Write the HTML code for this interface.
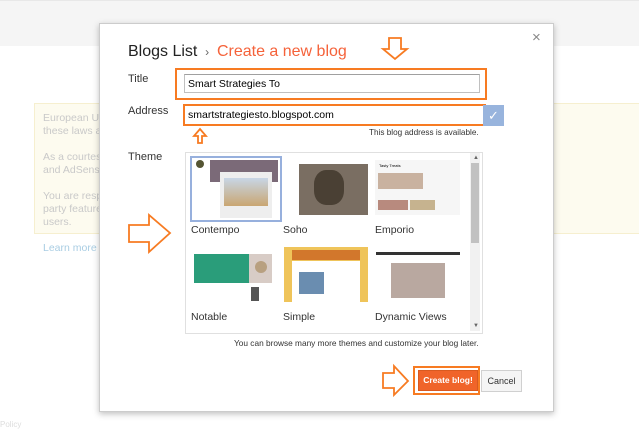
<!DOCTYPE html><html><head><style>
body{margin:0;width:639px;height:430px;overflow:hidden;background:#fff;font-family:"Liberation Sans",Arial,sans-serif;position:relative}
.a{position:absolute}
.y{left:34px;top:103px;width:620px;height:129px;background:#fdfbef;border:1px solid #f6efcf;color:#c9c9c9;font-size:10.5px;line-height:13px}
.t{font-size:11px;color:#333}
.th{position:absolute;overflow:hidden}
.lb{position:absolute;font-size:10.5px;color:#333}
</style></head><body>
<div class="a" style="left:0;top:0;width:639px;height:45px;background:#f5f5f5;border-top:1px solid #e8e8e8"></div>
<div class="a y"><div style="padding:8px 8px">European Union laws require you to give European Union visitors information ... g. In many cases,<br>these laws also<br><br>As a courtesy, ... e of Google Analytics<br>and AdSense<br><br>You are responsible ... example by adding third<br>party features, ... collected from your<br>users.<br><br><span style="color:#a9cde3">Learn more</span> about</div></div>
<div class="a" style="left:0;top:420px;font-size:8px;color:#ddd">Policy</div>
<div class="a" style="left:99px;top:23px;width:453px;height:387px;background:#fff;border:1px solid #ccc;box-shadow:0 2px 6px rgba(0,0,0,.25)"></div>
<div class="a" style="left:532px;top:29px;font-size:15px;color:#888">×</div>
<div class="a" style="left:128px;top:43px;font-size:16px;color:#222">Blogs List <span style="font-size:12px;color:#666">&nbsp;›&nbsp;</span> <span style="color:#f5623a">Create a new blog</span></div>
<div class="a t" style="left:128px;top:73px">Title</div>
<div class="a t" style="left:128px;top:105px">Address</div>
<div class="a t" style="left:128px;top:151px">Theme</div>
<div class="a" style="left:175px;top:68px;width:308px;height:28px;border:2px solid #f77b22"></div>
<div class="a" style="left:184px;top:74px;height:19px;border:1px solid #c0c0c0;border-top-color:#a0a0a0;font-size:10.5px;line-height:19px;padding-left:3px;box-sizing:border-box;width:296px">Smart Strategies To</div>
<div class="a" style="left:183px;top:104px;width:296px;height:18px;border:2px solid #f77b22;font-size:10.5px;line-height:18px;padding-left:3px">smartstrategiesto.blogspot.com</div>
<div class="a" style="left:483px;top:105px;width:21px;height:21px;background:#98b4dd;color:#fff;font-size:13px;text-align:center;line-height:21px">✓</div>
<div class="a" style="left:369px;top:128px;font-size:8.2px;color:#333">This blog address is available.</div>
<div class="a" style="left:185px;top:152px;width:296px;height:180px;border:1px solid #e0e0e0"></div>
<div class="a" style="left:470px;top:153px;width:10px;height:178px;background:#f1f1f1"></div>
<div class="a" style="left:471px;top:163px;width:8px;height:80px;background:#c1c1c1"></div>
<div class="a" style="left:473px;top:155px;font-size:6px;color:#666">▲</div>
<div class="a" style="left:473px;top:323px;font-size:6px;color:#666">▼</div>
<div class="th" style="left:190px;top:156px;width:88px;height:62px;border:2px solid #97b0dd;background:#fff">
<div class="a" style="left:18px;top:2px;width:68px;height:22px;background:#7b6a78"></div>
<div class="a" style="left:28px;top:14px;width:52px;height:46px;background:#eee"></div>
<div class="a" style="left:32px;top:20px;width:44px;height:28px;background:linear-gradient(#c8d6e6,#c9a672)"></div>
<div class="a" style="left:4px;top:2px;width:8px;height:8px;border-radius:50%;background:#553"></div></div>
<div class="th" style="left:284px;top:160px;width:84px;height:55px;background:#fff">
<div class="a" style="left:15px;top:4px;width:69px;height:51px;background:#7a6e62"></div>
<div class="a" style="left:30px;top:10px;width:30px;height:35px;border-radius:40%;background:#4a4034"></div></div>
<div class="th" style="left:375px;top:160px;width:85px;height:55px;background:#f6f6f6">
<div class="a" style="left:3px;top:13px;width:45px;height:16px;background:#c9b2a0"></div>
<div class="a" style="left:3px;top:40px;width:30px;height:10px;background:#b88a7e"></div>
<div class="a" style="left:35px;top:40px;width:25px;height:10px;background:#c6b38f"></div>
<div class="a" style="left:4px;top:3px;font-size:4px">Tasty Treats</div></div>
<div class="lb" style="left:191px;top:224px">Contempo</div>
<div class="lb" style="left:283px;top:224px">Soho</div>
<div class="lb" style="left:375px;top:224px">Emporio</div>
<div class="th" style="left:192px;top:247px;width:82px;height:55px;background:#fff">
<div class="a" style="left:2px;top:7px;width:55px;height:29px;background:#2a9d7a"></div>
<div class="a" style="left:57px;top:7px;width:23px;height:29px;background:#d8ccc6"></div>
<div class="a" style="left:63px;top:14px;width:12px;height:12px;border-radius:50%;background:#b8a080"></div>
<div class="a" style="left:59px;top:40px;width:8px;height:14px;background:#555"></div></div>
<div class="th" style="left:284px;top:247px;width:84px;height:55px;background:#efc45a">
<div class="a" style="left:8px;top:3px;width:68px;height:10px;background:#d2772c"></div>
<div class="a" style="left:8px;top:14px;width:68px;height:41px;background:#fff"></div>
<div class="a" style="left:15px;top:25px;width:25px;height:22px;background:#6a8db0"></div></div>
<div class="th" style="left:376px;top:247px;width:84px;height:55px;background:#fff">
<div class="a" style="left:0;top:5px;width:84px;height:3px;background:#333"></div>
<div class="a" style="left:15px;top:16px;width:54px;height:35px;background:#b9a8a0"></div></div>
<div class="lb" style="left:191px;top:311px">Notable</div>
<div class="lb" style="left:283px;top:311px">Simple</div>
<div class="lb" style="left:375px;top:311px">Dynamic Views</div>
<div class="a" style="left:234px;top:338px;font-size:8.3px;color:#333">You can browse many more themes and customize your blog later.</div>
<div class="a" style="left:413px;top:366px;width:63px;height:25px;border:2px solid #f77b22"></div>
<div class="a" style="left:418px;top:370px;width:60px;height:21px;background:#f0642a;border:1px solid #d95a20;box-sizing:border-box;color:#fff;font-size:8.5px;font-weight:bold;text-align:center;line-height:19px">Create blog!</div>
<div class="a" style="left:481px;top:370px;width:41px;height:22px;background:#f5f5f5;border:1px solid #d0d0d0;box-sizing:border-box;font-size:9px;text-align:center;line-height:20px;color:#333">Cancel</div>
<svg class="a" style="left:0;top:0" width="639" height="430" fill="#fff" stroke="#f77b22" stroke-width="1.8">
<path d="M389 38h12v11h6l-12 10l-12-10h6z"/>
<path d="M198 143v-7h-4l6-7l6 7h-4v7z"/>
<path d="M129 225h20v-10l21 18l-21 19v-10h-20z"/>
<path d="M383 373h11v-7l14 15l-14 14v-7h-11z"/>
</svg>
</body></html>
